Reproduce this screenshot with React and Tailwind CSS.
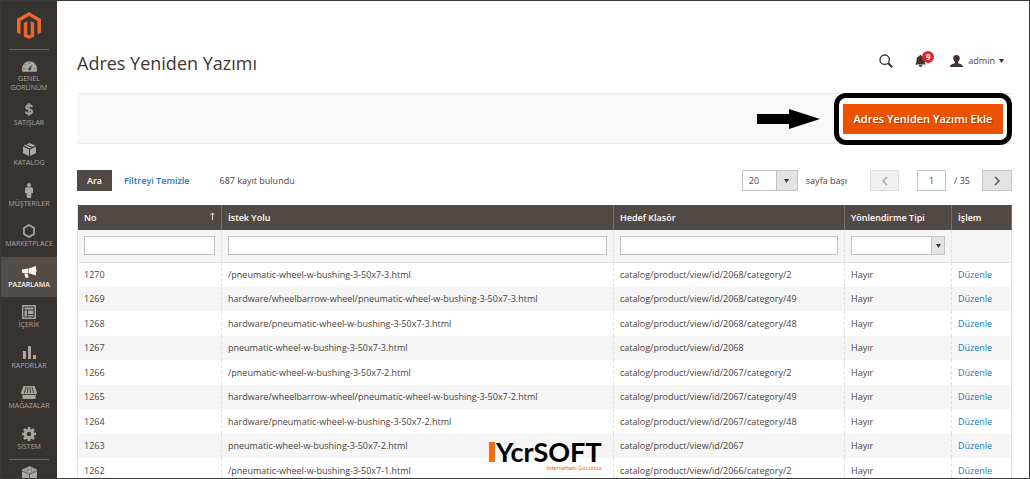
import { useState } from "react";

const menuItems = [
  { label: "SATIŞLAR", icon: DollarIcon },
  { label: "KATALOG", icon: BoxIcon },
  { label: "MÜŞTERİLER", icon: PersonIcon },
  { label: "MARKETPLACE", icon: HexagonIcon },
  { label: "PAZARLAMA", icon: MegaphoneIcon, active: true },
  { label: "İÇERİK", icon: LayoutIcon },
  { label: "RAPORLAR", icon: BarsIcon },
  { label: "MAĞAZALAR", icon: StoreIcon },
  { label: "SİSTEM", icon: GearIcon },
];

const rewrites = [
  { id: 1270, path: "/pneumatic-wheel-w-bushing-3-50x7-3.html", target: "catalog/product/view/id/2068/category/2" },
  { id: 1269, path: "hardware/wheelbarrow-wheel/pneumatic-wheel-w-bushing-3-50x7-3.html", target: "catalog/product/view/id/2068/category/49" },
  { id: 1268, path: "hardware/pneumatic-wheel-w-bushing-3-50x7-3.html", target: "catalog/product/view/id/2068/category/48" },
  { id: 1267, path: "pneumatic-wheel-w-bushing-3-50x7-3.html", target: "catalog/product/view/id/2068" },
  { id: 1266, path: "/pneumatic-wheel-w-bushing-3-50x7-2.html", target: "catalog/product/view/id/2067/category/2" },
  { id: 1265, path: "hardware/wheelbarrow-wheel/pneumatic-wheel-w-bushing-3-50x7-2.html", target: "catalog/product/view/id/2067/category/49" },
  { id: 1264, path: "hardware/pneumatic-wheel-w-bushing-3-50x7-2.html", target: "catalog/product/view/id/2067/category/48" },
  { id: 1263, path: "pneumatic-wheel-w-bushing-3-50x7-2.html", target: "catalog/product/view/id/2067" },
  { id: 1262, path: "/pneumatic-wheel-w-bushing-3-50x7-1.html", target: "catalog/product/view/id/2066/category/2" },
];

export default function App() {
  return (
    <div className="relative flex h-screen overflow-hidden border border-[#3a3a3a] bg-white font-['Open_Sans','Noto_Sans',sans-serif] text-[9px] leading-3 text-[#4a423c]">
      <Sidebar />
      <main className="min-w-0 flex-1 pr-[17px] pl-5">
        <PageHeader />
        <ActionBar />
        <GridControls />
        <RewriteTable />
      </main>
      <Watermark />
    </div>
  );
}

// --- Sidebar ---

function Sidebar() {
  return (
    <nav className="w-14 shrink-0 overflow-hidden bg-[#373330] text-[7px] leading-[9px] text-[#aaa6a0]">
      <a href="#" aria-label="Magento" className="mx-2 flex h-[49px] items-center justify-center border-b border-[#736963]">
        <MagentoLogo />
      </a>
      <a href="#" className="flex h-[45px] flex-col items-center pt-2 text-center">
        <span className="flex h-4 items-center"><GaugeIcon /></span>
        <span>GENEL<br />GÖRÜNÜM</span>
      </a>
      {menuItems.map(({ label, icon: Icon, active }) => (
        <a
          key={label}
          href="#"
          className={`flex h-10 flex-col items-center pt-1.5 even:h-[41px] ${active ? "bg-[#524d49] font-semibold text-[#f7f3eb]" : ""}`}
        >
          <span className="flex h-[17px] items-center"><Icon /></span>
          <span>{label}</span>
        </a>
      ))}
      <a href="#" aria-label="Extensions" className="mx-2 flex justify-center border-t border-[#736963] pt-1.5">
        <BrickIcon />
      </a>
    </nav>
  );
}

// --- Page header ---

function PageHeader() {
  return (
    <header className="flex h-[92px] items-end justify-between pr-2 pb-4">
      <h1 className="text-[18px] leading-7 text-[#41362f]">Adres Yeniden Yazımı</h1>
      <div className="flex h-8 items-center">
        <button type="button" aria-label="Ara" className="mr-[22px]">
          <SearchIcon />
        </button>
        <button type="button" aria-label="Bildirimler" className="relative mr-6">
          <BellIcon />
          <span className="absolute -top-1 left-[7px] flex size-3 items-center justify-center rounded-full bg-[#e22626] text-[8px] font-bold text-white">9</span>
        </button>
        <button type="button" className="flex items-center">
          <UserIcon />
          <span className="mr-1 ml-[5px]">admin</span>
          <Caret />
        </button>
      </div>
    </header>
  );
}

function ActionBar() {
  return (
    <div className="flex h-[51px] items-center justify-end border-y border-[#ececec] bg-[#f8f8f8]">
      <svg className="mr-3.5 h-5 w-[63px]" viewBox="0 0 63 20">
        <path d="M0 5h32V0l31 10-31 10v-5H0z" fill="#000" />
      </svg>
      <div className="rounded-xl border-[5px] border-black bg-white px-1 py-1.5">
        <button type="button" className="h-[30px] w-40 bg-[#eb5202] text-[11px] font-semibold text-white [text-shadow:1px_1px_0_rgba(0,0,0,0.25)]">
          Adres Yeniden Yazımı Ekle
        </button>
      </div>
    </div>
  );
}

// --- Grid ---

function GridControls() {
  const [page, setPage] = useState("1");

  return (
    <div className="flex items-center pt-[26px] pb-3.5">
      <button type="button" className="h-[21px] w-[35px] bg-[#514943] font-semibold text-white">Ara</button>
      <a href="#" className="ml-3 font-semibold text-[#1979c3]">Filtreyi Temizle</a>
      <span className="ml-[30px]">687 kayıt bulundu</span>
      <div className="ml-auto flex items-center">
        <div className="relative">
          <select id="limit" defaultValue="20" className="block h-[21px] w-14 appearance-none border border-[#c4c4c4] bg-white pl-1.5">
            <option>20</option>
            <option>30</option>
            <option>50</option>
          </select>
          <span className="pointer-events-none absolute inset-y-0 right-0 flex w-[22px] items-center justify-center border border-[#c4c4c4] bg-[#e3e3e3]">
            <Caret />
          </span>
        </div>
        <label htmlFor="limit" className="ml-2">sayfa başı</label>
        <button type="button" disabled aria-label="Önceki" className="ml-[23px] flex h-[21px] w-[29px] items-center justify-center border border-[#dedede] bg-[#f0f0f0] text-[#a5a19e]">
          <Chevron d="M6 1 2 5l4 4" />
        </button>
        <input
          id="page"
          value={page}
          onChange={e => setPage(e.target.value)}
          className="ml-[18px] h-[21px] w-[29px] border border-[#c4c4c4] bg-white text-center"
        />
        <label htmlFor="page" className="ml-2">/ 35</label>
        <button type="button" aria-label="Sonraki" className="ml-3 flex h-[21px] w-[30px] items-center justify-center border border-[#c4c4c4] bg-[#e3e3e3] text-[#514943]">
          <Chevron d="m2 1 4 4-4 4" />
        </button>
      </div>
    </div>
  );
}

function RewriteTable() {
  return (
    <table className="w-full table-fixed border-collapse border-x border-[#e3e3e3] text-left">
      <colgroup>
        <col className="w-36" />
        <col />
        <col className="w-[231px]" />
        <col className="w-[107px]" />
        <col className="w-[60px]" />
      </colgroup>
      <thead>
        <tr className="h-[25px] bg-[#514943] text-white *:border-r *:border-[#766e69] *:px-1.5 *:font-semibold">
          <th>
            <span className="flex justify-between">
              No
              <svg className="h-2 w-[5px]" viewBox="0 0 5 8" fill="none" stroke="currentColor" strokeWidth="0.9">
                <path d="M2.5 8V1M.5 3l2-2 2 2" />
              </svg>
            </span>
          </th>
          <th>İstek Yolu</th>
          <th>Hedef Klasör</th>
          <th>Yönlendirme Tipi</th>
          <th>İşlem</th>
        </tr>
        <tr className="h-8 border-b border-[#e3e3e3] bg-[#f5f5f5] *:border-r *:border-dashed *:border-[#e0e0e0] *:px-1.5">
          <td><FilterInput label="No" /></td>
          <td><FilterInput label="İstek Yolu" /></td>
          <td><FilterInput label="Hedef Klasör" /></td>
          <td>
            <div className="relative">
              <select aria-label="Yönlendirme Tipi" className="block h-[19px] w-full appearance-none border border-[#c4c4c4] bg-white pl-1">
                <option></option>
                <option>Hayır</option>
              </select>
              <span className="pointer-events-none absolute inset-y-0 right-0 flex w-3.5 items-center justify-center border border-[#c4c4c4] bg-[#e3e3e3]">
                <Caret />
              </span>
            </div>
          </td>
          <td></td>
        </tr>
      </thead>
      <tbody>
        {rewrites.map(row => (
          <tr key={row.id} className="h-[25px] *:border-r *:border-dashed *:border-[#e0e0e0] *:px-1.5 even:h-6 even:bg-[#f5f5f5]">
            <td>{row.id}</td>
            <td>{row.path}</td>
            <td>{row.target}</td>
            <td>Hayır</td>
            <td><a href="#" className="text-[#1979c3]">Düzenle</a></td>
          </tr>
        ))}
      </tbody>
    </table>
  );
}

function FilterInput({ label }) {
  return <input aria-label={label} className="block h-[19px] w-full border border-[#c4c4c4] bg-white px-1" />;
}

function Watermark() {
  return (
    <div className="absolute bottom-1.5 left-[488px] flex flex-col items-end">
      <div className="flex items-center gap-px">
        <span className="h-5 w-1.5 bg-[#f9690e]" />
        <span className="font-['Lato',sans-serif] text-[27px] leading-6 font-bold text-black">YcrSOFT</span>
      </div>
      <span className="font-['Roboto',sans-serif] text-[6px] leading-2 text-[#f9690e]">İnternetteki Gücünüz</span>
    </div>
  );
}

// --- Icons ---

function Caret() {
  return (
    <svg className="h-1 w-[5px]" viewBox="0 0 5 4">
      <path d="M0 0h5L2.500 4z" fill="#41362f" />
    </svg>
  );
}

function Chevron({ d }) {
  return (
    <svg className="h-2.5 w-2" viewBox="0 0 8 10" fill="none" stroke="currentColor" strokeWidth="1.4">
      <path d={d} />
    </svg>
  );
}

function MagentoLogo() {
  return (
    <svg className="h-[27px] w-6" viewBox="0 0 24 27" fill="#ee672f">
      <path d="M12 0 0 7v13.500l3.500 2V9L12 4l8.500 5v13.500l3.500-2V7z" />
      <path d="M13.700 22.500 12 23.500l-1.700-1V9L6.800 11v13.500L12 27l5.200-2.500V11L13.700 9z" />
    </svg>
  );
}

function SearchIcon() {
  return (
    <svg className="h-3.5 w-3.5" viewBox="0 0 14 14" fill="none" stroke="#41362f">
      <circle cx="5.700" cy="5.700" r="4.700" strokeWidth="1.400" />
      <path d="m9.200 9.200 4 4" strokeWidth="2" />
    </svg>
  );
}

function BellIcon() {
  return (
    <svg className="h-3 w-[11px]" viewBox="0 0 11 12" fill="#41362f">
      <path d="M5.500 0c.7 0 1 .4 1 1C8.500 1.400 9.400 2.800 9.400 4.500c0 2.700.2 3.700 1.600 5H0c1.400-1.300 1.600-2.300 1.600-5C1.600 2.800 2.500 1.400 4.500 1c0-.6.300-1 1-1zM3.800 10h3.400c0 1.200-.7 1.900-1.700 1.900S3.800 11.200 3.800 10z" />
    </svg>
  );
}

function UserIcon() {
  return (
    <svg className="h-3 w-[13px]" viewBox="0 0 13 12" fill="#41362f">
      <path d="M6.500 0C8.800 0 9.800 1.300 9.800 3.300c0 1.500-.8 2.800-1.800 3.700v1c.3.700 5 .8 5 4H0c0-3.200 4.700-3.300 5-4V7C4 6.100 3.200 4.800 3.200 3.300 3.200 1.300 4.200 0 6.500 0z" />
    </svg>
  );
}

function GaugeIcon() {
  return (
    <svg className="h-[11px] w-[15px]" viewBox="0 0 16 11">
      <path d="M8 0a8 8 0 0 1 8 8c0 1.200-.1 2-.5 3H.5C.1 10 0 9.200 0 8a8 8 0 0 1 8-8z" fill="currentColor" />
      <path d="M10.800 3.500 9.200 8.600a1.300 1.300 0 1 1-2.300-1.100z" fill="#373330" />
      <path d="M8 1.200v1.200M3.500 3.400l.8.8M1.600 8h1.200M13.200 8h1.200" stroke="#373330" strokeWidth=".8" />
    </svg>
  );
}

function DollarIcon() {
  return (
    <svg className="h-[13px] w-2" viewBox="0 0 8 13" fill="none" stroke="currentColor">
      <path d="M7 4.200C6.900 2.900 5.800 2.200 4 2.200S1.200 3 1.200 4.200C1.200 6.800 7 5.600 7 8.700 7 10 5.800 10.800 4 10.800S1 10 .9 8.500" strokeWidth="1.900" />
      <path d="M4 0v13" strokeWidth="1.300" />
    </svg>
  );
}

function BoxIcon() {
  return (
    <svg className="h-[13px] w-[13px]" viewBox="0 0 13 13" fill="currentColor">
      <path d="M3.600 1.200 6.500 0 12.300 2.600 9.500 4zM2.600 1.700.7 2.600l5.800 2.800 1.900-.9zM0 3.500l6 2.900V13L0 10zM13 3.500 7 6.400V13l6-3z" />
    </svg>
  );
}

function PersonIcon() {
  return (
    <svg className="h-[15px] w-2" viewBox="0 0 8 15" fill="currentColor">
      <circle cx="4" cy="2" r="2" />
      <path d="M2 4.300h4c1.200 0 2 .8 2 2V10H6.500L6 15H2l-.5-5H0V6.300c0-1.200.8-2 2-2z" />
    </svg>
  );
}

function HexagonIcon() {
  return (
    <svg className="h-3.5 w-3" viewBox="0 0 12 14" fill="none" stroke="currentColor" strokeWidth="1.700">
      <path d="M6 1 11.100 4v6L6 13 .9 10V4z" />
    </svg>
  );
}

function MegaphoneIcon() {
  return (
    <svg className="h-3 w-[15px]" viewBox="0 0 15 12" fill="currentColor">
      <path d="M14 0v9.500L6.500 7.300V2.500zM14.300 3.300q1.400 1.400 0 3zM6 2.600v4.600L1 7C.3 6.900 0 6.500 0 6V4.300c0-.6.400-1 1-1zM2.300 7.500l3.200.2 1.300 3.800-3.200.5z" />
    </svg>
  );
}

function LayoutIcon() {
  return (
    <svg className="h-3.5 w-3.5" viewBox="0 0 14 14">
      <path d="M.7.7h12.600v12.600H.7z" fill="none" stroke="currentColor" strokeWidth="1.400" />
      <path d="M2.500 2.500h9v2h-9zM2.500 5.500h2.500v6H2.500zM6 5.500h5.500v3.500H6zM6 10h5.500v1.500H6z" fill="currentColor" />
    </svg>
  );
}

function BarsIcon() {
  return (
    <svg className="h-[13px] w-[13px]" viewBox="0 0 13 13" fill="currentColor">
      <path d="M0 5h3v8H0zM5 0h3v13H5zM10 9h3v4h-3z" />
    </svg>
  );
}

function StoreIcon() {
  return (
    <svg className="h-[13px] w-4" viewBox="0 0 16 13">
      <path d="M2.500 0h11L16 6.500c0 1-.6 1.700-1.500 1.700V13h-13V8.200C.6 8.200 0 7.500 0 6.500z" fill="currentColor" />
      <path d="M5 1 3.500 7M7 1l-.5 6M9 1l.5 6M11 1l1.500 6M2 8.500h12" stroke="#373330" strokeWidth=".9" fill="none" />
    </svg>
  );
}

function GearIcon() {
  return (
    <svg className="h-3.5 w-3.5" viewBox="0 0 14 14" fill="none" stroke="currentColor">
      <circle cx="7" cy="7" r="3.700" strokeWidth="3" />
      <path d="M7 0v2.500M7 11.500V14M0 7h2.500M11.500 7H14M2 2l2 2M10 10l2 2M12 2l-2 2M4 10l-2 2" strokeWidth="2.600" />
    </svg>
  );
}

function BrickIcon() {
  return (
    <svg className="h-4 w-[15px]" viewBox="0 0 15 16">
      <path d="M7.500 0 15 3.500V12l-7.500 4L0 12V3.500z" fill="currentColor" />
      <path d="M0 4.800 7.500 8.500 15 4.800M7.500 8.500V16" fill="none" stroke="#373330" strokeWidth=".6" />
      <g fill="#d0ccc5" stroke="#373330" strokeWidth=".4">
        <ellipse cx="7.500" cy="2" rx="1.800" ry="1.100" />
        <ellipse cx="4" cy="3.800" rx="1.800" ry="1.100" />
        <ellipse cx="11" cy="3.800" rx="1.800" ry="1.100" />
        <ellipse cx="7.500" cy="5.700" rx="1.800" ry="1.100" />
      </g>
    </svg>
  );
}
